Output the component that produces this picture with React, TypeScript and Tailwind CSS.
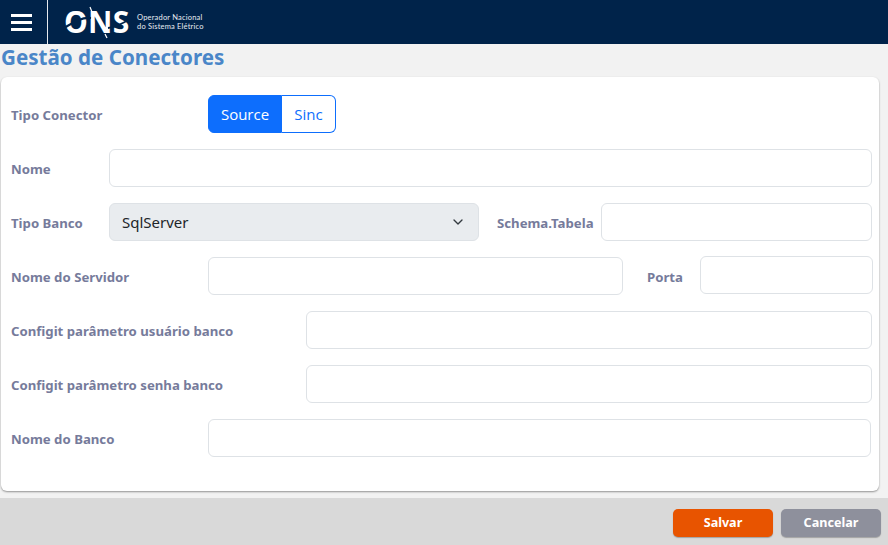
import { ChevronDown } from "lucide-react";

const inputClass = "h-[38px] rounded-[6px] border border-[#dee2e6] bg-white";
const labelClass = "text-[13.2px] font-bold text-[#767b9b] whitespace-nowrap leading-none pt-[4px]";

function Logo() {
    return (
        <div className="flex items-center ml-[16px]">
            <div className="relative w-[66px] h-[34px] flex items-center">
                <span className="font-['Open_Sans',sans-serif] font-bold text-[30px] leading-none text-white tracking-[0.2px]">ONS</span>
                {/* swooshes cutting through the letters */}
                <svg viewBox="0 0 66 34" className="absolute inset-0 w-full h-full">
                    <path d="M0 23 C10 17 18 12 27 13" fill="none" stroke="#00234a" strokeWidth="2.2" />
                    <path d="M44 23 C52 22 58 19 66 14" fill="none" stroke="#00234a" strokeWidth="1.8" />
                    <path d="M26 2 L28 7" fill="none" stroke="#ffffff" strokeWidth="1.2" />
                    <path d="M41 29 L43 33" fill="none" stroke="#ffffff" strokeWidth="1.2" />
                </svg>
            </div>
            <div className="ml-[7px] text-[7.5px] leading-[9.5px] text-[#e8edf3] font-['Lato',sans-serif] tracking-[0.2px]">
                <div>Operador Nacional</div>
                <div>do Sistema Elétrico</div>
            </div>
        </div>
    );
}

export default function App() {
    return (
        <div className="w-[888px] h-[545px] flex flex-col bg-[#f2f2f2] overflow-hidden font-['Noto_Sans',sans-serif]">
            {/* Header */}
            <header className="h-[44px] shrink-0 flex items-center bg-[#00234a]">
                <div className="w-[48px] h-full flex flex-col justify-center gap-[4px] pl-[11px] border-r border-[#e6e9ee]">
                    <span className="block w-[21px] h-[3px] bg-white"></span>
                    <span className="block w-[21px] h-[3px] bg-white"></span>
                    <span className="block w-[21px] h-[3px] bg-white"></span>
                </div>
                <Logo />
            </header>

            <h1 className="h-[33px] pl-[1px] text-[20.6px] leading-[27px] font-bold text-[#4a86c8]">Gestão de Conectores</h1>

            {/* Card */}
            <main className="ml-[1px] w-[878px] h-[414px] shrink-0 rounded-[6px] bg-white shadow-[0_1px_2px_rgba(0,0,0,0.4)] pl-[10px] pt-[18px] flex flex-col gap-[16px]">
                <div className="flex items-center h-[38px]">
                    <span className={`${labelClass} w-[197px]`}>Tipo Conector</span>
                    <div className="flex h-[38px] text-[15px] font-['Open_Sans',sans-serif]">
                        <button className="w-[74px] rounded-l-[6px] bg-[#0d6efd] border border-[#0d6efd] text-white">Source</button>
                        <button className="w-[54px] rounded-r-[6px] bg-white border border-l-0 border-[#0d6efd] text-[#0d6efd]">Sinc</button>
                    </div>
                </div>

                <div className="flex items-center h-[38px]">
                    <span className={`${labelClass} w-[98px]`}>Nome</span>
                    <div className={`${inputClass} w-[763px]`}></div>
                </div>

                <div className="flex items-center h-[38px]">
                    <span className={`${labelClass} w-[98px]`}>Tipo Banco</span>
                    <div className="h-[38px] w-[370px] rounded-[6px] border border-[#dee2e6] bg-[#e9ecef] flex items-center justify-between pl-[12px] pr-[12px] text-[15px] text-[#212529]">
                        <span>SqlServer</span>
                        <ChevronDown size={16} strokeWidth={2} className="text-[#343a40]" />
                    </div>
                    <span className={`${labelClass} ml-[18px] w-[104px]`}>Schema.Tabela</span>
                    <div className={`${inputClass} w-[271px]`}></div>
                </div>

                <div className="flex items-center h-[38px]">
                    <span className={`${labelClass} w-[197px]`}>Nome do Servidor</span>
                    <div className={`${inputClass} w-[415px]`}></div>
                    <span className={`${labelClass} ml-[24px] w-[53px]`}>Porta</span>
                    <div className={`${inputClass} w-[173px] -mt-[2px]`}></div>
                </div>

                <div className="flex items-center h-[38px]">
                    <span className={`${labelClass} w-[295px]`}>Configit parâmetro usuário banco</span>
                    <div className={`${inputClass} w-[566px]`}></div>
                </div>

                <div className="flex items-center h-[38px]">
                    <span className={`${labelClass} w-[295px]`}>Configit parâmetro senha banco</span>
                    <div className={`${inputClass} w-[566px]`}></div>
                </div>

                <div className="flex items-center h-[38px]">
                    <span className={`${labelClass} w-[197px]`}>Nome do Banco</span>
                    <div className={`${inputClass} w-[663px]`}></div>
                </div>
            </main>

            {/* Footer */}
            <footer className="mt-[7px] flex-1 bg-[#d9d9d9] flex items-start justify-end gap-[8px] pt-[11px] pr-[7px]">
                <button className="w-[100px] h-[28px] rounded-[5px] bg-[#e85400] text-white text-[12.6px] font-bold shadow-[0_1px_1px_rgba(0,0,0,0.25)]">Salvar</button>
                <button className="w-[100px] h-[28px] rounded-[5px] bg-[#8e909c] text-white text-[12.6px] font-bold shadow-[0_1px_1px_rgba(0,0,0,0.25)]">Cancelar</button>
            </footer>
        </div>
    );
}
